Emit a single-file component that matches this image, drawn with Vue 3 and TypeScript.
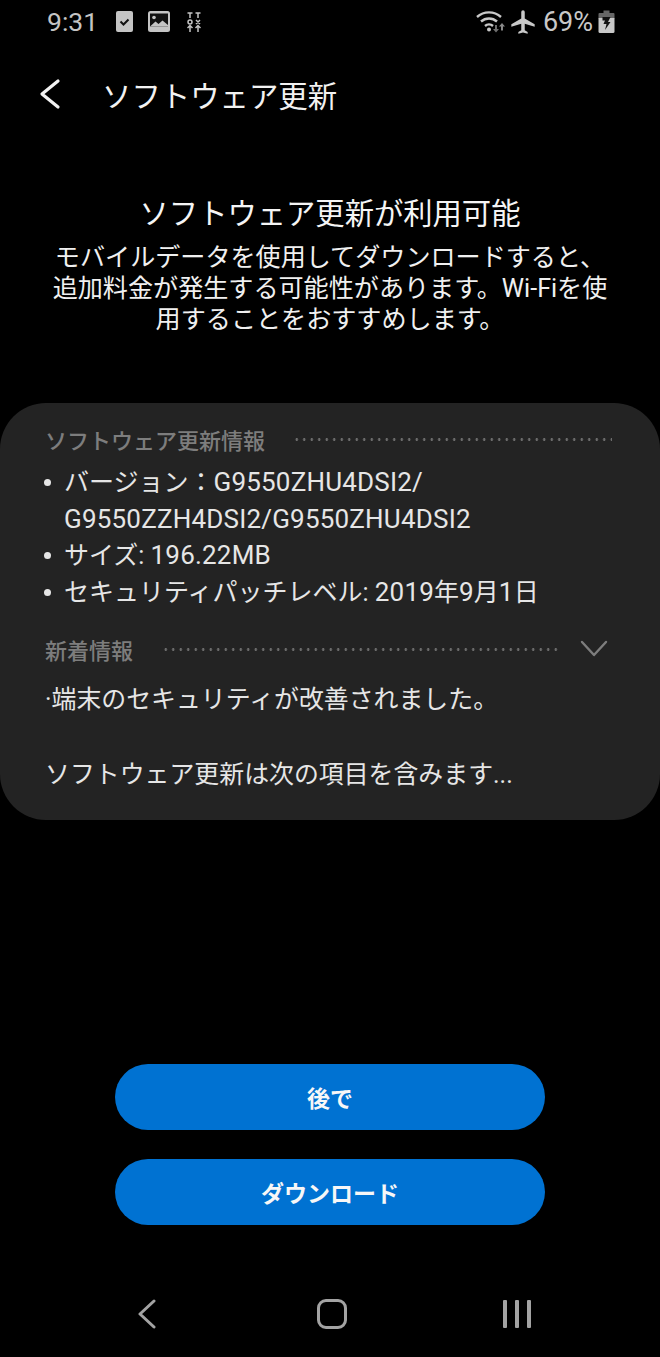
<template>
  <div class="screen">
    <div class="status-bar">
      <div class="status-left">
        <span class="clock">9:31</span>
        <svg class="ic-check" viewBox="0 0 17 21"><rect width="17" height="21" rx="2" fill="#c4c4c4" /><path d="M4.500 10.500l3 3 5-5" fill="none" stroke="#111" stroke-width="2" /></svg>
        <svg class="ic-image" viewBox="0 0 22 21"><rect width="22" height="21" rx="2.500" fill="#c4c4c4" /><rect x="2" y="2.500" width="18" height="13" fill="#111" /><circle cx="6" cy="6.500" r="1.800" fill="#c4c4c4" /><path d="M2 15.500l5.500-5 3 2.500 4-3.500 5.500 4.500v1.500z" fill="#c4c4c4" /></svg>
        <svg class="ic-sliders" viewBox="0 0 14 20" fill="none" stroke="#c4c4c4" stroke-width="1.500"><path d="M0.500 1h5M8.500 1h5M3 1v5M11 1v5M9 8l4 4M13 8l-4 4M3 14v6M11 14v6M0.500 16l2.500-2.500L5.500 16M8.500 16l2.500-2.500 2.500 2.500" /><circle cx="3" cy="10" r="2" /></svg>
      </div>
      <div class="status-right">
        <svg class="ic-wifi" viewBox="0 0 30 22">
          <path d="M1 6a18 18 0 0 1 24 0M5 10.500a12 12 0 0 1 16 0M9 15a6 6 0 0 1 8 0" fill="none" stroke="#c8c8c8" stroke-width="2.400" />
          <circle cx="13" cy="18.500" r="2" fill="#c8c8c8" />
          <path d="M19 14h2v4h2l-3 3.500-3-3.500h2z" fill="#6e6e6e" />
          <path d="M26 12l3 3.500h-2v4h-2v-4h-2z" fill="#8a8a8a" />
        </svg>
        <svg class="ic-plane" viewBox="0 0 24 24"><path d="M22 16v-2l-8.500-5V3.500a1.500 1.500 0 0 0-3 0V9L2 14v2l8.500-2.500V19L8 20.500V22l4-1 4 1v-1.500L13.500 19v-5.500z" fill="#c8c8c8" /></svg>
        <span class="battery-text">69%</span>
        <svg class="ic-battery" viewBox="0 0 16 23"><path d="M5 0.500h6v2.500H5z" fill="#666" /><rect y="3" width="16" height="6" rx="1" fill="#666" /><path d="M0 8h16v13.500a1.500 1.500 0 0 1-1.500 1.500h-13A1.500 1.500 0 0 1 0 21.500z" fill="#c8c8c8" /><path d="M4 7h8l-2.500 5H12l-5.500 8 1.500-6H5l1.500-3.500H4z" fill="#111" /></svg>
      </div>
    </div>

    <header class="app-bar">
      <svg class="back" viewBox="0 0 24 34" fill="none" stroke="#f2f2f2" stroke-width="3.200" stroke-linecap="round" stroke-linejoin="round"><path d="M20 4L4 17l16 13" /></svg>
      <h1 class="app-title">ソフトウェア更新</h1>
    </header>

    <section class="intro">
      <h2 class="intro-title">ソフトウェア更新が利用可能</h2>
      <p class="intro-text">モバイルデータを使用してダウンロードすると、<br />追加料金が発生する可能性があります。Wi-Fiを使<br />用することをおすすめします。</p>
    </section>

    <section class="card">
      <div class="section-head">
        <span class="section-label">ソフトウェア更新情報</span>
        <span class="dots"></span>
      </div>
      <ul class="info-list">
        <li>
          <span class="bullet"></span>
          <span>バージョン：<span class="latin">G9550ZHU4DSI2/<br />G9550ZZH4DSI2/G9550ZHU4DSI2</span></span>
        </li>
        <li>
          <span class="bullet"></span>
          <span>サイズ: <span class="latin">196.22MB</span></span>
        </li>
        <li>
          <span class="bullet"></span>
          <span>セキュリティパッチレベル: <span class="latin">2019</span>年<span class="latin">9</span>月<span class="latin">1</span>日</span>
        </li>
      </ul>
      <div class="section-head section-head--news">
        <span class="section-label">新着情報</span>
        <span class="dots dots--short"></span>
        <svg class="chevron" viewBox="0 0 28 18" fill="none" stroke="#7d7d7d" stroke-width="2.400" stroke-linecap="round" stroke-linejoin="round"><path d="M2 2l12 13L26 2" /></svg>
      </div>
      <p class="news">·端末のセキュリティが改善されました。</p>
      <p class="news news--more">ソフトウェア更新は次の項目を含みます...</p>
    </section>

    <div class="actions">
      <button class="btn">後で</button>
      <button class="btn">ダウンロード</button>
    </div>

    <nav class="nav-bar">
      <svg class="nav-back" viewBox="0 0 20 30" fill="none" stroke="#a3a3a3" stroke-width="3" stroke-linecap="round" stroke-linejoin="round"><path d="M17 2L3 15l14 13" /></svg>
      <span class="nav-home"></span>
      <svg class="nav-recent" viewBox="0 0 28 28" fill="#a3a3a3"><rect x="0" y="0" width="4" height="28" rx="1" /><rect x="12" y="0" width="4" height="28" rx="1" /><rect x="24" y="0" width="4" height="28" rx="1" /></svg>
    </nav>
  </div>
</template>

<script setup lang="ts">
</script>

<style>
html,
body {
  margin: 0;
  background: #000;
}
</style>

<style scoped>
.screen {
  width: 660px;
  height: 1357px;
  background: #000;
  color: #f2f2f2;
  font-family: Roboto, "Noto Sans CJK JP", sans-serif;
  display: flex;
  flex-direction: column;
  overflow: hidden;
}

.status-bar {
  height: 43px;
  padding: 0 45px 0 47px;
  display: flex;
  justify-content: space-between;
  align-items: center;
}

.status-left,
.status-right {
  display: flex;
  align-items: center;
}

.clock {
  font-size: 26.500px;
  color: #c4c4c4;
  margin-right: 18px;
}

.ic-check { width: 17px; height: 21px; margin-right: 15px; }
.ic-image { width: 22px; height: 21px; margin-right: 17px; }
.ic-sliders { width: 14px; height: 20px; }
.ic-wifi { width: 30px; height: 22px; margin-right: 3px; }
.ic-plane { width: 28px; height: 28px; margin-right: 6px; }
.ic-battery { width: 17px; height: 23px; margin-left: 5px; }

.battery-text {
  font-size: 27px;
  color: #c8c8c8;
}

.app-bar {
  height: 44px;
  margin-top: 29px;
  padding-left: 38px;
  display: flex;
  align-items: center;
}

.back { width: 24px; height: 34px; margin-right: 40px; }

.app-title {
  margin: 0;
  font-size: 29.400px;
  font-weight: 400;
  color: #f2f2f2;
}

.intro {
  margin-top: 78px;
  text-align: center;
}

.intro-title {
  margin: 0;
  font-size: 29.300px;
  font-weight: 400;
  line-height: 40px;
  color: #f5f5f5;
}

.intro-text {
  margin: 8px 0 0;
  font-size: 25.100px;
  line-height: 31px;
  color: #f0f0f0;
}

.card {
  margin-top: 68px;
  height: 417px;
  box-sizing: border-box;
  padding: 22px 48px 0 45px;
  background: #232323;
  border-radius: 46px;
}

.section-head {
  display: flex;
  align-items: center;
  height: 28px;
}

.section-label {
  font-size: 22px;
  font-weight: 500;
  color: #7d7d7d;
  white-space: nowrap;
}

.dots {
  flex: 1;
  margin-left: 28px;
  height: 3px;
  background-image: radial-gradient(circle, #6c6c6c 1.200px, transparent 1.500px);
  background-size: 7.500px 3px;
  background-repeat: repeat-x;
}

.dots--short {
  margin-left: 29px;
}

.info-list {
  list-style: none;
  margin: 12px 0 0;
  padding: 0;
  font-size: 25px;
  line-height: 36.500px;
  color: #e6e6e6;
}

.info-list li {
  display: flex;
}

.latin {
  font-size: 26px;
  line-height: 1;
  letter-spacing: 0.200px;
}

.bullet {
  flex: none;
  width: 7px;
  height: 7px;
  margin: 14px 13px 0 -1px;
  border-radius: 50%;
  background: #e6e6e6;
}

.section-head--news {
  margin-top: 24px;
}

.chevron {
  width: 28px;
  height: 18px;
  margin: 0 4px 0 22px;
}

.news {
  margin: 18px 0 0;
  font-size: 24.900px;
  line-height: 37px;
  color: #e6e6e6;
}

.news--more {
  margin-top: 38px;
}

.actions {
  margin-top: 244px;
  display: flex;
  flex-direction: column;
  align-items: center;
  gap: 29px;
}

.btn {
  width: 430px;
  height: 66px;
  border: none;
  border-radius: 33px;
  background: #0072d2;
  color: #f7f7f7;
  font-family: inherit;
  font-size: 23px;
  font-weight: 700;
}

.nav-bar {
  margin-top: 74px;
  padding: 0 129px 0 137px;
  display: flex;
  justify-content: space-between;
  align-items: center;
}

.nav-back { width: 20px; height: 30px; }

.nav-home {
  width: 24px;
  height: 24px;
  margin-left: 4px;
  border: 3px solid #a3a3a3;
  border-radius: 9px;
}

.nav-recent { width: 28px; height: 28px; }
</style>
